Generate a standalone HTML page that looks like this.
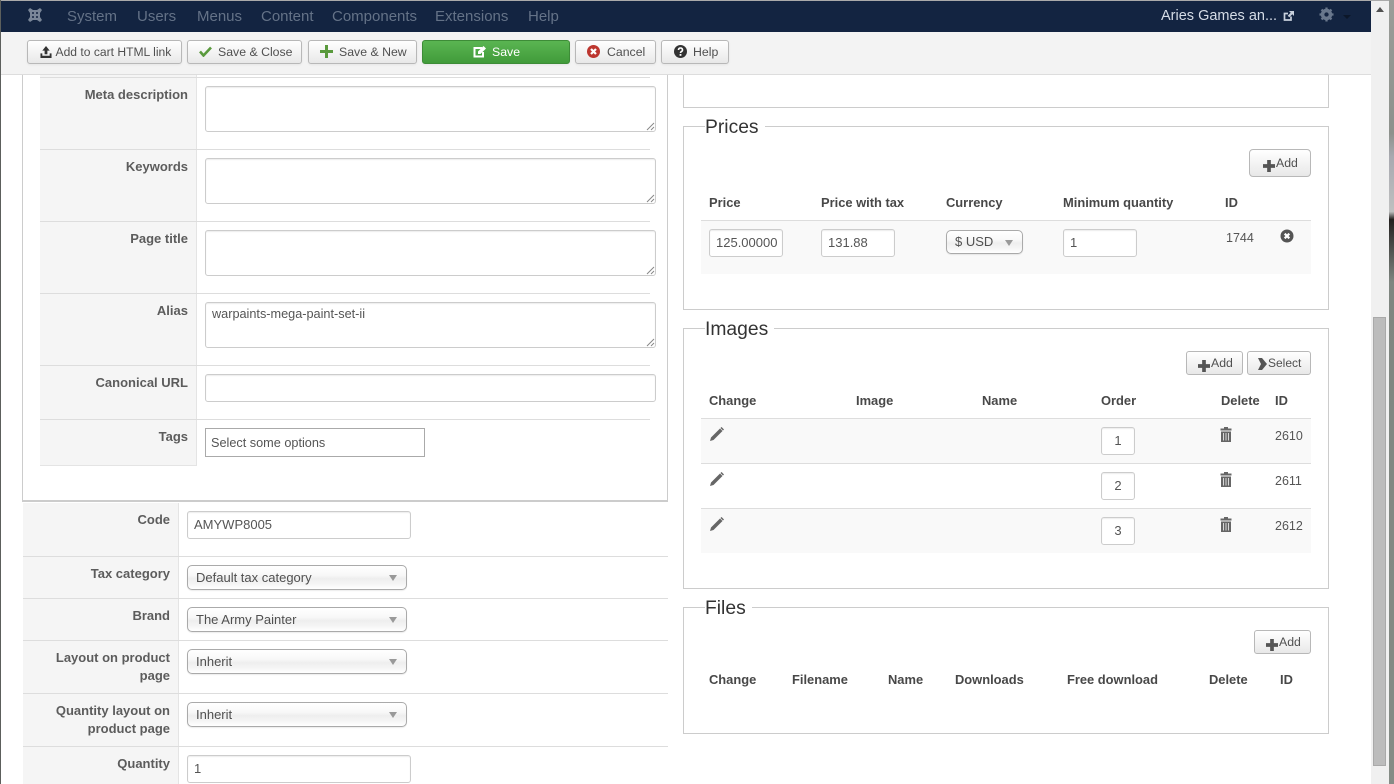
<!DOCTYPE html>
<html><head><meta charset="utf-8"><title>Product</title>
<style>
html,body{margin:0;padding:0;background:#fff}
body{position:relative;width:1394px;height:784px;overflow:hidden;font:13px/18px "Liberation Sans",Arial,sans-serif;color:#555}
div,span,svg{position:absolute;box-sizing:border-box}
.t{white-space:nowrap}
.n{top:8px;font-size:15px;line-height:18px;color:#647287;white-space:nowrap}
.b{height:24px;top:40px;border:1px solid #b8b8b8;border-radius:3px;background:linear-gradient(#fff,#e8e8e8);color:#505050;font-size:12.3px;line-height:22px;white-space:nowrap;box-shadow:0 1px 2px rgba(0,0,0,.06)}
.b span{top:0;line-height:22px}
.l{font-weight:bold;color:#5c5c5c;text-align:right;white-space:nowrap;line-height:18px}
.i{background:#fff;border:1px solid #ccc;border-radius:3px;box-shadow:inset 0 1px 1px rgba(0,0,0,.075);color:#555;line-height:26px;padding-left:6px;white-space:nowrap}
.s{border:1px solid #aaa;border-radius:5px;background:linear-gradient(#fff 0,#f8f8f8 40%,#eee 55%,#f4f4f4 75%,#fff 100%);color:#505050;line-height:23px;padding-left:8px;white-space:nowrap;box-shadow:0 1px 1px rgba(0,0,0,.08)}
.s:after{content:"";position:absolute;right:9px;top:9px;border:4px solid transparent;border-top:6px solid #999;border-bottom:0}
.h{height:1px;background:#ddd}
.f{border:1px solid #ccc;background:#fff}
.lg{font-size:19.3px;line-height:24px;color:#333;background:#fff;padding:0 6px 0 0;white-space:nowrap}
.th{font-weight:bold;color:#484848;white-space:nowrap;line-height:18px;font-size:12.9px}
.td{color:#555;white-space:nowrap;line-height:18px;font-size:12.5px}
.ab{border:1px solid #b8b8b8;border-radius:3px;background:linear-gradient(#fff,#e8e8e8);color:#505050;font-size:12.3px;white-space:nowrap}
</style></head><body>

<!-- window edges -->
<div style="left:0;top:0;width:1394px;height:1px;background:#aaa"></div>
<div style="left:0;top:0;width:1px;height:784px;background:#5c5f5c"></div>

<!-- navbar -->
<div style="left:1px;top:1px;width:1370px;height:31px;background:#132441"></div>
<svg style="left:26px;top:6px" width="18" height="18" viewBox="0 0 18 18"><path d="M2 4 4 2 7 4H11L14 2 16 4 14 7V11L16 14 14 16 11 14H7L4 16 2 14 4 11V7Z" fill="#7a8698"/><g fill="#132441"><circle cx="7" cy="7" r="1"/><circle cx="11" cy="7" r="1"/><circle cx="7" cy="11" r="1"/><circle cx="11" cy="11" r="1"/></g></svg>
<span class="n" style="left:67px">System</span>
<span class="n" style="left:137px">Users</span>
<span class="n" style="left:197px">Menus</span>
<span class="n" style="left:261px">Content</span>
<span class="n" style="left:332px">Components</span>
<span class="n" style="left:435px">Extensions</span>
<span class="n" style="left:528px">Help</span>
<span class="t" style="left:1161px;top:7px;font-size:14.5px;color:#d5dce6">Aries Games an...</span>
<svg style="left:1283px;top:10px" width="12" height="12" viewBox="0 0 12 12"><path d="M8 6.500V10H1.500V3.500H5" fill="none" stroke="#c8d0dc" stroke-width="1.700"/><path d="M6 1H11V6L9.300 4.300 6.300 7.300 4.700 5.700 7.700 2.700Z" fill="#c8d0dc"/></svg>
<svg style="left:1319px;top:7px" width="15" height="15" viewBox="0 0 16 16"><circle cx="8" cy="8" r="4.500" fill="none" stroke="#69778c" stroke-width="3.200"/><path d="M8 .5V15.500M.5 8H15.500M2.700 2.700 13.300 13.300M13.300 2.700 2.700 13.300" stroke="#69778c" stroke-width="2.400"/><circle cx="8" cy="8" r="2.300" fill="#132441"/></svg>
<div style="left:1343px;top:15px;border:4px solid transparent;border-top:4px solid #0c1729;border-bottom:0"></div>

<!-- toolbar -->
<div style="left:1px;top:32px;width:1370px;height:43px;background:#f3f3f3;border-bottom:1px solid #ddd"></div>
<div class="b" style="left:27px;width:155px"><svg style="left:11px;top:5px" width="14" height="12" viewBox="0 0 14 13"><path d="M7 0 11 5H8.500V9H5.500V5H3ZM1 8H3V10.500H11V8H13V13H1Z" fill="#333"/></svg><span style="left:27.500px;font-size:12.100px">Add to cart HTML link</span></div>
<div class="b" style="left:187px;width:115px"><svg style="left:11px;top:5px" width="13" height="11" viewBox="0 0 13 11"><path d="M1 5.500 4.500 9.500 12 1.500" fill="none" stroke="#5a9a3d" stroke-width="2.600"/></svg><span style="left:30px">Save &amp; Close</span></div>
<div class="b" style="left:308px;width:109px"><svg style="left:11px;top:4px" width="13" height="13" viewBox="0 0 13 13"><path d="M5 0H8V5H13V8H8V13H5V8H0V5H5Z" fill="#5a9a3d"/></svg><span style="left:30px">Save &amp; New</span></div>
<div class="b" style="left:422px;width:148px;background:linear-gradient(#5ab552,#419b3a);border-color:#3d8c37;color:#fff"><svg style="left:50px;top:5px" width="13" height="12" viewBox="0 0 13 12"><path d="M9 2H1.500V10.500H10V6" fill="none" stroke="#fff" stroke-width="2"/><path d="M5 5.500 10.500 0 13 2.500 7.500 8H5Z" fill="#fff"/></svg><span style="left:69px">Save</span></div>
<div class="b" style="left:575px;width:81px"><svg style="left:11px;top:4px" width="13" height="13" viewBox="0 0 13 13"><circle cx="6.500" cy="6.500" r="6.500" fill="#bd362f"/><path d="M4 4 9 9M9 4 4 9" stroke="#fff" stroke-width="2.200"/></svg><span style="left:31px">Cancel</span></div>
<div class="b" style="left:661px;width:68px"><svg style="left:12px;top:4px" width="13" height="13" viewBox="0 0 13 13"><circle cx="6.500" cy="6.500" r="6.500" fill="#333"/><path d="M4.500 5Q4.500 3 6.500 3T8.500 5Q8.500 6 7.300 6.600 6.500 7 6.500 8" fill="none" stroke="#fff" stroke-width="1.600"/><rect x="5.600" y="9" width="1.800" height="1.800" fill="#fff"/></svg><span style="left:31px">Help</span></div>

<!-- left inner panel -->
<div style="left:22px;top:75px;width:646px;height:427px;border:solid #ccc;border-width:0 1px 2px 1px"></div>
<div style="left:40px;top:75px;width:157px;height:391px;background:#f5f5f5;border-right:1px solid #e4e4e4;border-bottom:1px solid #e4e4e4"></div>
<div class="h" style="left:40px;top:77px;width:610px"></div>
<div class="h" style="left:40px;top:149px;width:610px"></div>
<div class="h" style="left:40px;top:221px;width:610px"></div>
<div class="h" style="left:40px;top:293px;width:610px"></div>
<div class="h" style="left:40px;top:365px;width:610px"></div>
<div class="h" style="left:40px;top:419px;width:610px"></div>

<div class="l" style="right:1206px;top:86px">Meta description</div>
<div class="l" style="right:1206px;top:158px">Keywords</div>
<div class="l" style="right:1206px;top:230px">Page title</div>
<div class="l" style="right:1206px;top:302px">Alias</div>
<div class="l" style="right:1206px;top:374px">Canonical URL</div>
<div class="l" style="right:1206px;top:428px">Tags</div>

<div class="i" style="left:205px;top:86px;width:451px;height:46px"></div>
<div class="i" style="left:205px;top:158px;width:451px;height:46px"></div>
<div class="i" style="left:205px;top:230px;width:451px;height:46px"></div>
<div class="i" style="left:205px;top:302px;width:451px;height:46px;font-size:12.7px;line-height:23px">warpaints-mega-paint-set-ii</div>
<div class="i" style="left:205px;top:374px;width:451px;height:28px"></div>
<div style="left:205px;top:428px;width:220px;height:29px;border:1px solid #aaa;background:#fff;color:#555;padding-left:5px;line-height:28px;font-size:12.7px;white-space:nowrap">Select some options</div>
<svg style="left:646px;top:122px" width="9" height="9"><path d="M1 8 8 1M5 8 8 5" stroke="#888"/></svg>
<svg style="left:646px;top:194px" width="9" height="9"><path d="M1 8 8 1M5 8 8 5" stroke="#888"/></svg>
<svg style="left:646px;top:266px" width="9" height="9"><path d="M1 8 8 1M5 8 8 5" stroke="#888"/></svg>
<svg style="left:646px;top:338px" width="9" height="9"><path d="M1 8 8 1M5 8 8 5" stroke="#888"/></svg>

<!-- lower form -->
<div style="left:23px;top:503px;width:156px;height:281px;background:#f5f5f5;border-right:1px solid #e4e4e4"></div>
<div class="h" style="left:23px;top:556px;width:645px"></div>
<div class="h" style="left:23px;top:598px;width:645px"></div>
<div class="h" style="left:23px;top:640px;width:645px"></div>
<div class="h" style="left:23px;top:693px;width:645px"></div>
<div class="h" style="left:23px;top:746px;width:645px"></div>

<div class="l" style="right:1224px;top:511px">Code</div>
<div class="l" style="right:1224px;top:565px">Tax category</div>
<div class="l" style="right:1224px;top:607px">Brand</div>
<div class="l" style="right:1224px;top:649px">Layout on product<br>page</div>
<div class="l" style="right:1224px;top:702px">Quantity layout on<br>product page</div>
<div class="l" style="right:1224px;top:755px">Quantity</div>

<div class="i" style="left:187px;top:511px;width:224px;height:28px">AMYWP8005</div>
<div class="s" style="left:187px;top:565px;width:220px;height:25px">Default tax category</div>
<div class="s" style="left:187px;top:607px;width:220px;height:25px">The Army Painter</div>
<div class="s" style="left:187px;top:649px;width:220px;height:25px">Inherit</div>
<div class="s" style="left:187px;top:702px;width:220px;height:25px">Inherit</div>
<div class="i" style="left:187px;top:755px;width:224px;height:28px">1</div>

<!-- right: top fieldset -->
<div style="left:683px;top:75px;width:646px;height:33px;border:solid #ccc;border-width:0 1px 1px 1px"></div>

<!-- Prices -->
<div class="f" style="left:683px;top:126px;width:646px;height:184px"></div>
<div class="lg" style="left:705px;top:116px">Prices</div>
<div class="ab" style="left:1249px;top:149px;width:62px;height:28px;border-radius:4px"><svg style="left:13px;top:10px" width="12" height="12" viewBox="0 0 13 13"><path d="M4.500 0H8.500V4.500H13V8.500H8.500V13H4.500V8.500H0V4.500H4.500Z" fill="#555"/></svg><span style="left:26px;top:4px;line-height:18px">Add</span></div>
<div class="th" style="left:709px;top:194px">Price</div>
<div class="th" style="left:821px;top:194px">Price with tax</div>
<div class="th" style="left:946px;top:194px">Currency</div>
<div class="th" style="left:1063px;top:194px">Minimum quantity</div>
<div class="th" style="left:1225px;top:194px">ID</div>
<div class="h" style="left:701px;top:220px;width:610px"></div>
<div style="left:701px;top:221px;width:610px;height:53px;background:#f9f9f9"></div>
<div class="i" style="left:709px;top:229px;width:74px;height:28px">125.00000</div>
<div class="i" style="left:821px;top:229px;width:74px;height:28px">131.88</div>
<div class="s" style="left:946px;top:230px;width:77px;height:24px;line-height:22px">$ USD</div>
<div class="i" style="left:1063px;top:229px;width:74px;height:28px">1</div>
<div class="td" style="left:1226px;top:229px">1744</div>
<svg style="left:1280px;top:229px" width="14" height="14" viewBox="0 0 14 14"><circle cx="7" cy="7" r="6.500" fill="#555"/><path d="M4.700 4.700 9.300 9.300M9.300 4.700 4.700 9.300" stroke="#fff" stroke-width="2.200"/></svg>

<!-- Images -->
<div class="f" style="left:683px;top:328px;width:646px;height:261px"></div>
<div class="lg" style="left:705px;top:318px">Images</div>
<div class="ab" style="left:1186px;top:351px;width:57px;height:24px"><svg style="left:11px;top:8px" width="12" height="12" viewBox="0 0 13 13"><path d="M4.500 0H8.500V4.500H13V8.500H8.500V13H4.500V8.500H0V4.500H4.500Z" fill="#555"/></svg><span style="left:24px;top:2px;line-height:18px">Add</span></div>
<div class="ab" style="left:1247px;top:351px;width:64px;height:24px"><svg style="left:10px;top:6px" width="9" height="12" viewBox="0 0 9 12"><path d="M0 0H4L9 6 4 12H0L3 6Z" fill="#555"/></svg><span style="left:20px;top:2px;line-height:18px;font-size:12px">Select</span></div>
<div class="th" style="left:709px;top:392px">Change</div>
<div class="th" style="left:856px;top:392px">Image</div>
<div class="th" style="left:982px;top:392px">Name</div>
<div class="th" style="left:1101px;top:392px">Order</div>
<div class="th" style="left:1221px;top:392px">Delete</div>
<div class="th" style="left:1275px;top:392px">ID</div>
<div style="left:701px;top:419px;width:610px;height:44px;background:#f9f9f9"></div>
<div style="left:701px;top:509px;width:610px;height:44px;background:#f9f9f9"></div>
<div class="h" style="left:701px;top:418px;width:610px"></div>
<div class="h" style="left:701px;top:463px;width:610px"></div>
<div class="h" style="left:701px;top:508px;width:610px"></div>

<svg style="left:710px;top:427px" width="14" height="14" viewBox="0 0 14 14"><path d="M0 14 1 10.500 10 1.500 12.500 4 3.500 13Z" fill="#666"/><path d="M11 .5 13.500 3" stroke="#666" stroke-width="1.500"/></svg>
<svg style="left:710px;top:472px" width="14" height="14" viewBox="0 0 14 14"><path d="M0 14 1 10.500 10 1.500 12.500 4 3.500 13Z" fill="#666"/><path d="M11 .5 13.500 3" stroke="#666" stroke-width="1.500"/></svg>
<svg style="left:710px;top:517px" width="14" height="14" viewBox="0 0 14 14"><path d="M0 14 1 10.500 10 1.500 12.500 4 3.500 13Z" fill="#666"/><path d="M11 .5 13.500 3" stroke="#666" stroke-width="1.500"/></svg>

<div class="i" style="left:1101px;top:427px;width:34px;height:28px;padding:0;text-align:center">1</div>
<div class="i" style="left:1101px;top:472px;width:34px;height:28px;padding:0;text-align:center">2</div>
<div class="i" style="left:1101px;top:517px;width:34px;height:28px;padding:0;text-align:center">3</div>

<svg style="left:1220px;top:427px" width="12" height="15" viewBox="0 0 12 15"><path d="M4 0H8V1.500H11.500V3.500H.5V1.500H4ZM1 4.500H11V15H1Z" fill="#666"/><path d="M3.500 6V13.500M6 6V13.500M8.500 6V13.500" stroke="#d8d8d8"/></svg>
<svg style="left:1220px;top:472px" width="12" height="15" viewBox="0 0 12 15"><path d="M4 0H8V1.500H11.500V3.500H.5V1.500H4ZM1 4.500H11V15H1Z" fill="#666"/><path d="M3.500 6V13.500M6 6V13.500M8.500 6V13.500" stroke="#d8d8d8"/></svg>
<svg style="left:1220px;top:517px" width="12" height="15" viewBox="0 0 12 15"><path d="M4 0H8V1.500H11.500V3.500H.5V1.500H4ZM1 4.500H11V15H1Z" fill="#666"/><path d="M3.500 6V13.500M6 6V13.500M8.500 6V13.500" stroke="#d8d8d8"/></svg>

<div class="td" style="left:1275px;top:427px">2610</div>
<div class="td" style="left:1275px;top:472px">2611</div>
<div class="td" style="left:1275px;top:517px">2612</div>

<!-- Files -->
<div class="f" style="left:683px;top:607px;width:646px;height:127px"></div>
<div class="lg" style="left:705px;top:597px">Files</div>
<div class="ab" style="left:1254px;top:630px;width:57px;height:24px"><svg style="left:11px;top:8px" width="12" height="12" viewBox="0 0 13 13"><path d="M4.500 0H8.500V4.500H13V8.500H8.500V13H4.500V8.500H0V4.500H4.500Z" fill="#555"/></svg><span style="left:24px;top:2px;line-height:18px">Add</span></div>
<div class="th" style="left:709px;top:671px">Change</div>
<div class="th" style="left:792px;top:671px">Filename</div>
<div class="th" style="left:888px;top:671px">Name</div>
<div class="th" style="left:955px;top:671px">Downloads</div>
<div class="th" style="left:1067px;top:671px">Free download</div>
<div class="th" style="left:1209px;top:671px">Delete</div>
<div class="th" style="left:1280px;top:671px">ID</div>

<!-- scrollbar -->
<div style="left:1371px;top:1px;width:18px;height:783px;background:#f0f0f0"></div>
<div style="left:1376px;top:7px;border:5px solid transparent;border-bottom:5px solid #505050;border-top:0;border-left-width:4px;border-right-width:4px"></div>
<div style="left:1373px;top:317px;width:13px;height:449px;background:#bcbcbc;border:1px solid #a9a9a9"></div>
<div style="left:1389px;top:0;width:5px;height:784px;background:linear-gradient(#9a9d99 0,#8d918c 17%,#a8a9b0 20%,#bfc0c0 27%,#23201e 28%,#3a3a38 30%,#7f8680 36%,#858c86 100%)"></div>
</body></html>
